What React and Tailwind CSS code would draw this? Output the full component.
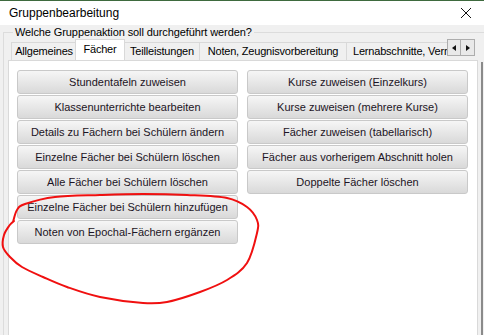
import React from "react";

const LEFT_BUTTONS = [
  "Stundentafeln zuweisen",
  "Klassenunterrichte bearbeiten",
  "Details zu Fächern bei Schülern ändern",
  "Einzelne Fächer bei Schülern löschen",
  "Alle Fächer bei Schülern löschen",
  "Einzelne Fächer bei Schülern hinzufügen",
  "Noten von Epochal-Fächern ergänzen",
];

const RIGHT_BUTTONS = [
  "Kurse zuweisen (Einzelkurs)",
  "Kurse zuweisen (mehrere Kurse)",
  "Fächer zuweisen (tabellarisch)",
  "Fächer aus vorherigem Abschnitt holen",
  "Doppelte Fächer löschen",
];

// hand-drawn red marker ring
const RING = [
  [13, 222], [17, 210], [25, 204], [55, 197], [100, 195], [143, 194], [187, 195],
  [227, 198], [247, 207], [257, 220], [257, 233], [247, 263], [227, 280],
  [200, 292], [167, 302], [143, 303], [100, 297], [67, 287], [43, 277],
  [22, 267], [10, 257], [3, 247], [4, 235], [9, 226], [14, 221],
];

function smoothPath(pts) {
  let d = `M${pts[0][0]},${pts[0][1]}`;
  for (let i = 0; i < pts.length - 1; i++) {
    const p0 = pts[i - 1] || pts[i];
    const p1 = pts[i];
    const p2 = pts[i + 1];
    const p3 = pts[i + 2] || p2;
    const c1 = [p1[0] + (p2[0] - p0[0]) / 6, p1[1] + (p2[1] - p0[1]) / 6];
    const c2 = [p2[0] - (p3[0] - p1[0]) / 6, p2[1] - (p3[1] - p1[1]) / 6];
    d += ` C${c1[0]},${c1[1]} ${c2[0]},${c2[1]} ${p2[0]},${p2[1]}`;
  }
  return d;
}

function ActionButton({ label }) {
  return (
    <button
      type="button"
      className="h-[24px] w-[221px] rounded-[3px] border border-[#c9c9c9] bg-gradient-to-b from-[#f6f6f6] to-[#d9d9d9] text-[11px] text-[#1c1424] leading-none whitespace-nowrap"
    >
      {label}
    </button>
  );
}

function Tab({ label, width, active, clipped }) {
  if (active) {
    return (
      <div
        className="h-[21px] -mx-[1px] shrink-0 border border-b-0 border-[#d9d9d9] bg-white flex items-center justify-center text-[11px] tracking-[-0.2px] text-black relative z-10"
        style={{ width }}
      >
        <span className="-mt-[2px]">{label}</span>
      </div>
    );
  }
  return (
    <div
      className={`h-[18px] shrink-0 border border-b-0 border-r-0 border-[#d9d9d9] bg-[#f0f0f0] flex items-center text-[11px] tracking-[-0.2px] text-black whitespace-nowrap overflow-hidden ${
        clipped ? "pl-[6px]" : "justify-center"
      }`}
      style={{ width }}
    >
      {label}
    </div>
  );
}

export default function App() {
  return (
    <div
      className="relative w-[484px] h-[335px] overflow-hidden bg-[#f0f0f0]"
      style={{ fontFamily: '"Liberation Sans", Arial, sans-serif' }}
    >
      <div className="h-[25px] bg-white border-t border-[#3e6a3e] flex items-center justify-between pl-[9px] pr-[12px]">
        <span className="text-[12px] text-black">Gruppenbearbeitung</span>
        <svg width="12" height="12" viewBox="0 0 12 12">
          <path d="M1 1 L11 11 M11 1 L1 11" stroke="#111" strokeWidth="1" />
        </svg>
      </div>

      <fieldset className="ml-[3px] w-[492px] border border-[#dcdcdc] pl-[4px] pb-0 h-[320px]">
        <legend className="ml-[5px] px-[2px] text-[11px] tracking-[-0.1px] leading-[14px] text-black">
          Welche Gruppenaktion soll durchgeführt werden?
        </legend>

        <div className="flex w-[470px] h-[21px] items-end">
          <div className="flex items-end flex-1 overflow-hidden pl-[3px] h-[21px]">
            <Tab label="Allgemeines" width={65} />
            <Tab label="Fächer" width={50} active />
            <Tab label="Teilleistungen" width={75} />
            <Tab label="Noten, Zeugnisvorbereitung" width={147} />
            <Tab label="Lernabschnitte, Vermerke" width={120} clipped />
          </div>
          <div className="self-start flex mr-[3px]">
            <div className="w-[14px] h-[17px] border border-[#adadad] bg-[#e9e9e9] flex items-center justify-center">
              <svg width="4" height="6" viewBox="0 0 4 6">
                <path d="M4 0 L0 3 L4 6 Z" fill="#111" />
              </svg>
            </div>
            <div className="w-[14px] h-[17px] border border-l-0 border-[#adadad] bg-[#e9e9e9] flex items-center justify-center">
              <svg width="4" height="6" viewBox="0 0 4 6">
                <path d="M0 0 L4 3 L0 6 Z" fill="#111" />
              </svg>
            </div>
          </div>
        </div>

        <div className="flex">
          <div className="w-[470px] h-[280px] bg-white border border-[#d9d9d9] pt-[9px] pl-[8px] flex gap-[9px]">
            <div className="flex flex-col gap-[1px]">
              {LEFT_BUTTONS.map((b) => (
                <ActionButton key={b} label={b} />
              ))}
            </div>
            <div className="flex flex-col gap-[1px]">
              {RIGHT_BUTTONS.map((b) => (
                <ActionButton key={b} label={b} />
              ))}
            </div>
          </div>
          <div className="ml-[3px] mt-[2px] w-[2px] bg-[#8a8a8a]" />
        </div>
      </fieldset>

      <svg
        className="absolute inset-0 pointer-events-none"
        width="484"
        height="335"
        viewBox="0 0 484 335"
      >
        <path d={smoothPath(RING)} fill="none" stroke="#f01010" strokeWidth="2" strokeLinecap="round" />
      </svg>
    </div>
  );
}
